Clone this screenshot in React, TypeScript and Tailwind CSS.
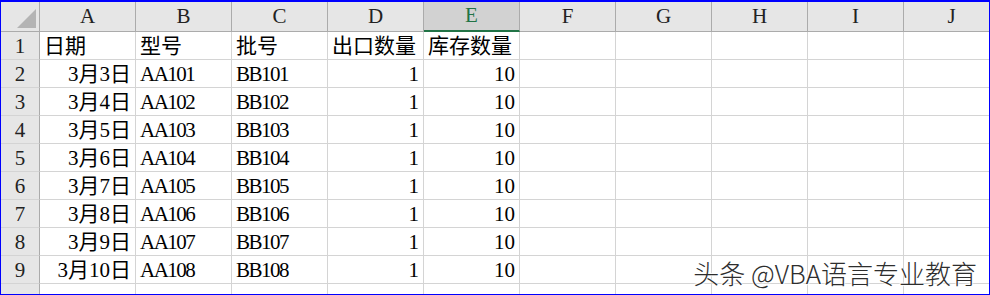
import React from 'react';

const COLS = ['A', 'B', 'C', 'D', 'E', 'F', 'G', 'H', 'I', 'J'];

const ROWS: { a: string; b: string; c: string; d: string; e: string }[] = [
  { a: '日期', b: '型号', c: '批号', d: '出口数量', e: '库存数量' },
  ...[3, 4, 5, 6, 7, 8, 9, 10].map((day, i) => ({
    a: `3月${day}日`,
    b: `AA10${i + 1}`,
    c: `BB10${i + 1}`,
    d: '1',
    e: '10',
  })),
];

const serif = "font-['Liberation_Serif','Noto_Sans_CJK_SC',serif]";

const Cell: React.FC<{ children?: React.ReactNode; right?: boolean; tight?: boolean }> = ({ children, right, tight }) => (
  <div
    className={`h-[28px] border-r border-b border-[#d4d4d4] flex items-center pt-[2px] text-[21px] text-black whitespace-nowrap overflow-hidden ${
      right ? 'justify-end pr-[4px]' : 'pl-[4px]'
    } ${tight ? 'tracking-[-1.5px]' : ''}`}
  >
    {children}
  </div>
);

export default function App() {
  return (
    <div className="w-[990px] h-[295px] bg-white">
      <div className={`relative w-[990px] h-[295px] border-l border-r border-b border-t-2 border-[#0000ff] overflow-hidden ${serif}`}>
        <div className="grid grid-cols-[39px_repeat(10,96px)]">
          {/* column header */}
          <div className="h-[30px] bg-[#e6e6e6] border-r border-b border-[#ababab] flex items-end justify-end pr-[3px] pb-[3px]">
            <svg width="19" height="19" viewBox="0 0 19 19">
              <polygon points="19,0 19,19 0,19" fill="#b4b4b4" />
            </svg>
          </div>
          {COLS.map((c) => (
            <div
              key={c}
              className={`h-[30px] flex items-center justify-center text-[21px] border-r ${
                c === 'E'
                  ? 'bg-[#d2d2d2] text-[#217346] border-b-2 border-b-[#217346] border-r-[#ababab]'
                  : 'bg-[#e6e6e6] text-[#222] border-b border-[#ababab]'
              }`}
            >
              {c}
            </div>
          ))}

          {ROWS.map((r, i) => (
            <React.Fragment key={i}>
              <div className="h-[28px] bg-[#e6e6e6] border-r border-b border-r-[#ababab] border-b-[#d4d4d4] flex items-center justify-center pt-[2px] text-[21px] text-[#222]">
                {i + 1}
              </div>
              <Cell right={i > 0}>{r.a}</Cell>
              <Cell tight={i > 0}>{r.b}</Cell>
              <Cell tight={i > 0}>{r.c}</Cell>
              <Cell right={i > 0}>{r.d}</Cell>
              <Cell right={i > 0}>{r.e}</Cell>
              <Cell />
              <Cell />
              <Cell />
              <Cell />
              <Cell />
            </React.Fragment>
          ))}

          <div className="h-[28px] bg-[#e6e6e6] border-r border-[#ababab] flex items-start justify-center pt-[4px] text-[21px] text-[#222]">
            10
          </div>
          {COLS.map((c) => (
            <div key={c} className="h-[28px] border-r border-[#d4d4d4]" />
          ))}
        </div>

        <div className="absolute right-[12px] bottom-[8px] font-['Noto_Sans_CJK_SC',sans-serif] font-light text-[26px] leading-none text-[#2e2e2e] [text-shadow:0_0_2px_#fff,1px_1px_1px_#fff,-1px_-1px_1px_#fff]">
          头条 @VBA语言专业教育
        </div>
      </div>
    </div>
  );
}
